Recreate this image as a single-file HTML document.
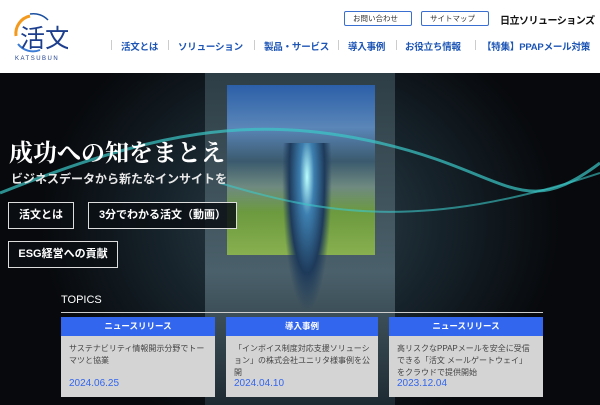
<!DOCTYPE html>
<html><head><meta charset="utf-8"><style>
*{margin:0;padding:0;box-sizing:border-box}
body{width:600px;height:405px;overflow:hidden;background:#fff;font-family:"Liberation Sans","Noto Sans CJK JP",sans-serif;position:relative}
.abs{position:absolute}
.tb{position:absolute;top:11px;height:15px;border:1px solid #3a6fd0;border-radius:2px;font-size:7.5px;color:#333;line-height:13px;padding-left:8px;white-space:nowrap}
.nav{position:absolute;top:39px;font-size:9.5px;font-weight:bold;color:#1d55b5;white-space:nowrap;letter-spacing:-.2px}
.sep{position:absolute;top:40px;width:1px;height:10px;background:#ccc}
.hero{position:absolute;left:0;top:73px;width:600px;height:332px;background:radial-gradient(ellipse 260px 220px at 300px 150px,#2f4550 0%,#16222a 55%,#07090c 100%);overflow:hidden}
.btn{position:absolute;border:1px solid #ddd;background:rgba(10,15,20,.85);color:#fff;font-size:11px;font-weight:bold;text-align:center;line-height:25px;white-space:nowrap}
.card{position:absolute;top:317px;height:80px;background:#d4d4d4}
.card .h{background:#3366ee;color:#fff;font-size:8.5px;font-weight:bold;text-align:center;height:19px;line-height:19px}
.card .t{font-size:8px;color:#444;line-height:12px;padding:7px 8px 0 8px;height:42px}
.card .d{font-size:10px;color:#3366ee;padding-left:8px}
</style></head><body>
<svg class="abs" style="left:8px;top:6px" width="60" height="50" viewBox="0 0 60 50">
<path d="M8 30 A18 18 0 0 1 22 10" stroke="#f39a1e" stroke-width="3" fill="none"/>
<path d="M10 38 A19 19 0 0 0 32 44" stroke="#3a7bd5" stroke-width="2" fill="none"/>
<path d="M22 8 A20 20 0 0 1 40 14" stroke="#1a4fa0" stroke-width="1.5" fill="none"/>
<text x="12" y="41" font-size="25" fill="#1d3f8e" font-family="Noto Sans CJK JP">活文</text>
</svg>
<div class="abs" style="left:15px;top:56px;font-size:6px;letter-spacing:1.5px;color:#1d3f8e">KATSUBUN</div>
<div class="tb" style="left:344px;width:68px">お問い合わせ</div>
<div class="tb" style="left:421px;width:68px">サイトマップ</div>
<div class="abs" style="left:500px;top:12px;font-size:10px;font-weight:bold;color:#111;white-space:nowrap;letter-spacing:-.5px">日立ソリューションズ</div>
<div class="sep" style="left:111px"></div><div class="nav" style="left:121px">活文とは</div>
<div class="sep" style="left:168px"></div><div class="nav" style="left:178px">ソリューション</div>
<div class="sep" style="left:254px"></div><div class="nav" style="left:264px">製品・サービス</div>
<div class="sep" style="left:338px"></div><div class="nav" style="left:348px">導入事例</div>
<div class="sep" style="left:396px"></div><div class="nav" style="left:405px">お役立ち情報</div>
<div class="sep" style="left:475px"></div><div class="nav" style="left:482px">【特集】PPAPメール対策</div>
<div class="hero">
<div class="abs" style="left:205px;top:0;width:190px;height:332px;background:linear-gradient(#2e3e46,#4a606a 60%,#1e2a32)"></div>
<div class="abs" style="left:227px;top:12px;width:148px;height:170px;background:linear-gradient(#2b5fa8 0%,#5a86b8 25%,#3b5a6e 45%,#6f8a80 60%,#6c9a3e 75%,#88b050 100%)"></div>
<div class="abs" style="left:282px;top:70px;width:50px;height:170px;background:radial-gradient(ellipse at 50% 20%,#bff 0%,#3d7fb0 20%,#1e3a5a 50%,transparent 70%)"></div>
<svg class="abs" style="left:0;top:0" width="600" height="332"><path d="M0 120 C150 60 250 40 380 70 S520 150 600 90" stroke="#3cc8c8" stroke-width="3" fill="none" opacity=".7"/><path d="M220 110 C320 140 420 160 600 100" stroke="#3cc8c8" stroke-width="2" fill="none" opacity=".6"/></svg>
</div>
<div class="abs" style="left:9px;top:133px;font-size:24px;font-weight:bold;color:#fff;font-family:'Liberation Serif','Noto Serif CJK SC',serif;white-space:nowrap">成功への知をまとえ</div>
<div class="abs" style="left:11px;top:170px;font-size:12px;font-weight:bold;color:#e8e8e8;white-space:nowrap">ビジネスデータから新たなインサイトを</div>
<div class="btn" style="left:8px;top:202px;width:66px;height:27px">活文とは</div>
<div class="btn" style="left:88px;top:202px;width:149px;height:27px">3分でわかる活文（動画）</div>
<div class="btn" style="left:8px;top:241px;width:110px;height:27px">ESG経営への貢献</div>
<div class="abs" style="left:61px;top:294px;font-size:11px;color:#fff">TOPICS</div>
<div class="abs" style="left:61px;top:312px;width:482px;height:1px;background:#ccc"></div>
<div class="card" style="left:61px;width:154px"><div class="h">ニュースリリース</div><div class="t">サステナビリティ情報開示分野でトーマツと協業</div><div class="d">2024.06.25</div></div>
<div class="card" style="left:226px;width:152px"><div class="h">導入事例</div><div class="t">「インボイス制度対応支援ソリューション」の株式会社ユニリタ様事例を公開</div><div class="d">2024.04.10</div></div>
<div class="card" style="left:389px;width:154px"><div class="h">ニュースリリース</div><div class="t">高リスクなPPAPメールを安全に受信できる「活文 メールゲートウェイ」をクラウドで提供開始</div><div class="d">2023.12.04</div></div>
</body></html>
